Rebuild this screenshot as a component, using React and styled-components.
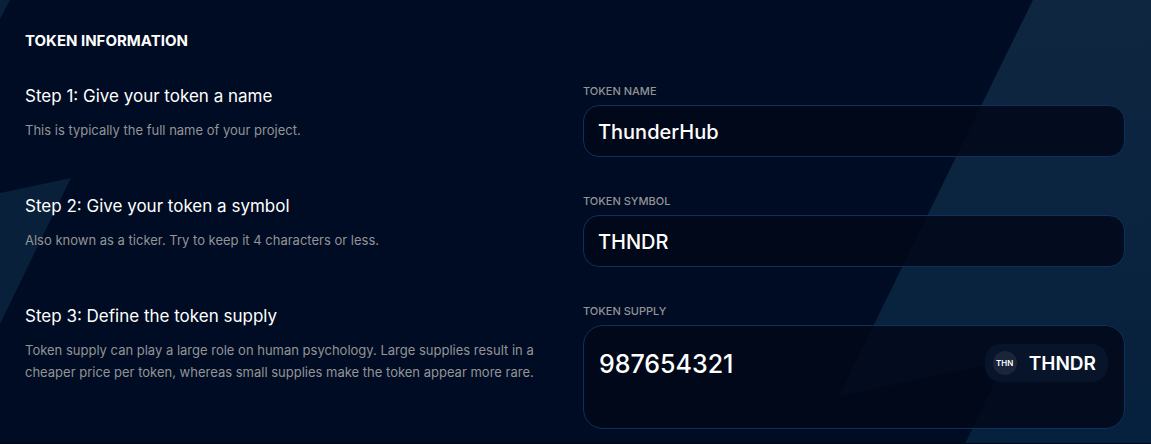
import React, { useState } from "react";
import styled, { createGlobalStyle } from "styled-components";

const GlobalStyle = createGlobalStyle`
  * {
    box-sizing: border-box;
  }

  body {
    margin: 0;
    background-color: #000c23;
    color: white;
    font-family: Inter, "Liberation Sans", sans-serif;
  }
`;

const PageContainer = styled.main`
  position: relative;
  min-height: 100vh;
  overflow: hidden;
  border-bottom: 1px solid #010819;
`;

const Backdrop = styled.svg`
  position: absolute;
  top: 0;
  width: 1151px;
  height: 444px;

  ${({ $side }) => ($side === "left" ? "left: 0;" : "right: 0;")}
`;

const FormWrapper = styled.form`
  position: relative;
  display: flex;
  flex-direction: column;
  padding: 32px 26px 14px 25px;
`;

const Title = styled.h2`
  margin: 0 0 35px;
  font-size: 15px;
  line-height: 18px;
  font-weight: 700;
  text-transform: uppercase;
`;

const Steps = styled.div`
  display: flex;
  flex-direction: column;
  gap: 38px;
`;

const StepRow = styled.section`
  display: grid;
  grid-template-columns: repeat(2, minmax(0, 1fr));
  column-gap: 16px;
`;

const StepTitle = styled.h3`
  margin: 0 0 12px;
  font-size: 17px;
  line-height: 22px;
  font-weight: 400;
`;

const StepText = styled.p`
  margin: 0;
  color: #939496;
  font-size: 13px;
  line-height: 22px;
`;

const Field = styled.div`
  display: flex;
  flex-direction: column;
`;

const Label = styled.label`
  margin-bottom: 8px;
  color: #939496;
  font-size: 11px;
  line-height: 12px;
  font-weight: 500;
  text-transform: uppercase;
`;

const fieldBox = `
  border: 1px solid #0d315a;
  background-color: rgba(1, 8, 25, 0.85);
`;

const TextInput = styled.input`
  ${fieldBox}
  width: 100%;
  height: 52px;
  padding: 1px 14px 0;
  border-radius: 16px;
  color: white;
  font: inherit;
  font-size: 20px;
  font-weight: 500;
  outline: none;
`;

const SupplyBox = styled.div`
  ${fieldBox}
  display: flex;
  align-items: flex-start;
  height: 104px;
  padding: 18px 16px 18px 15px;
  border-radius: 20px;
`;

const SupplyInput = styled.input`
  flex: 1;
  min-width: 0;
  height: 38px;
  padding: 1px 0 0;
  border: none;
  background: none;
  color: white;
  font: inherit;
  font-size: 25px;
  font-weight: 500;
  outline: none;
`;

const TokenBadge = styled.div`
  display: flex;
  align-items: center;
  gap: 12px;
  height: 38px;
  padding: 0 12px 0 8px;
  border-radius: 16px;
  background-color: #07142a;
  font-size: 19px;
  font-weight: 600;
`;

const TokenLogo = styled.span`
  display: flex;
  align-items: center;
  justify-content: center;
  width: 24px;
  height: 24px;
  border-radius: 50%;
  background-color: #1a243b;
  font-size: 8px;
`;

function App() {
  const [name, setName] = useState("ThunderHub");
  const [symbol, setSymbol] = useState("THNDR");
  const [supply, setSupply] = useState("987654321");

  return (
    <>
      <GlobalStyle />
      <PageContainer>
        <Backdrop $side="left" viewBox="0 0 1151 444" aria-hidden="true">
          <path d="M0 0H10L0 19ZM0 193L71 178L0 324Z" fill="#082039" />
        </Backdrop>
        <Backdrop $side="right" viewBox="0 0 1151 444" aria-hidden="true">
          <defs>
            <linearGradient id="bolt" x1="0" y1="0" x2="0" y2="1">
              <stop offset="0" stopColor="#0f2640" />
              <stop offset="1" stopColor="#06213d" />
            </linearGradient>
          </defs>
          <path d="M1033 0H1151V444H965L1005 361L839 396Z" fill="url(#bolt)" />
        </Backdrop>
        <FormWrapper>
          <Title>Token information</Title>
          <Steps>
            <StepRow>
              <div>
                <StepTitle>Step 1: Give your token a name</StepTitle>
                <StepText>
                  This is typically the full name of your project.
                </StepText>
              </div>
              <Field>
                <Label htmlFor="name">Token name</Label>
                <TextInput
                  id="name"
                  value={name}
                  onChange={(e) => setName(e.target.value)}
                />
              </Field>
            </StepRow>
            <StepRow>
              <div>
                <StepTitle>Step 2: Give your token a symbol</StepTitle>
                <StepText>
                  Also known as a ticker. Try to keep it 4 characters or less.
                </StepText>
              </div>
              <Field>
                <Label htmlFor="symbol">Token symbol</Label>
                <TextInput
                  id="symbol"
                  value={symbol}
                  onChange={(e) => setSymbol(e.target.value)}
                />
              </Field>
            </StepRow>
            <StepRow>
              <div>
                <StepTitle>Step 3: Define the token supply</StepTitle>
                <StepText>
                  Token supply can play a large role on human psychology. Large
                  supplies result in a cheaper price per token, whereas small
                  supplies make the token appear more rare.
                </StepText>
              </div>
              <Field>
                <Label htmlFor="supply">Token supply</Label>
                <SupplyBox>
                  <SupplyInput
                    id="supply"
                    value={supply}
                    onChange={(e) => setSupply(e.target.value)}
                  />
                  <TokenBadge>
                    <TokenLogo>{symbol.slice(0, 3)}</TokenLogo>
                    {symbol}
                  </TokenBadge>
                </SupplyBox>
              </Field>
            </StepRow>
          </Steps>
        </FormWrapper>
      </PageContainer>
    </>
  );
}

export default App;
